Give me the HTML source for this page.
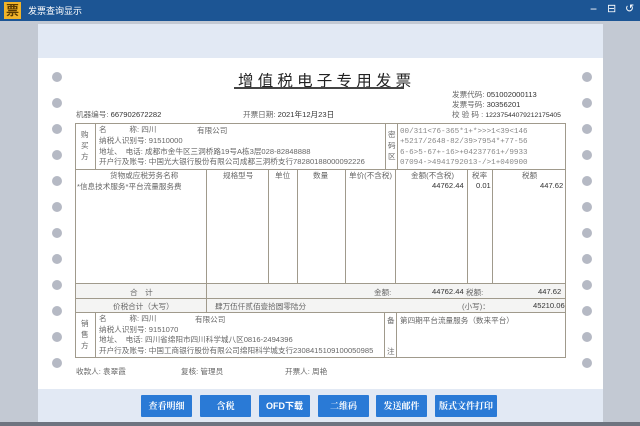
<!DOCTYPE html>
<html><head><meta charset="utf-8"><style>
*{margin:0;padding:0;box-sizing:border-box}
body{width:640px;height:426px;overflow:hidden;background:#c3c9d3;font-family:"Liberation Sans","Noto Sans CJK SC",sans-serif;position:relative;color:#555}
.a{position:absolute;white-space:nowrap}
.t{font-size:7.6px;color:#666}
.b{border:1px solid #a09a8c}
.dot{position:absolute;width:10px;height:10px;border-radius:50%;background:#b5b9c4}
.btn{position:absolute;top:395px;height:22px;background:#2a7ad6;color:#fff;font-size:9px;font-weight:bold;text-align:center;line-height:22px;border-radius:1px;font-family:"Noto Serif CJK SC",serif}
.mono{font-family:"Liberation Mono",monospace;font-size:7.6px;color:#888;line-height:10.3px}
</style></head><body>
<div class="a" style="left:0;top:0;width:640px;height:21px;background:#1c5594"></div>
<div class="a" style="left:4px;top:2px;width:17px;height:17px;background:#f0b429;color:#5a3a00;font-size:13px;font-weight:bold;line-height:17px;text-align:center">票</div>
<div class="a" style="left:28px;top:4px;color:#fff;font-size:9px">发票查询显示</div>
<div class="a" style="left:590px;top:2px;color:#fff;font-size:12px">−</div>
<div class="a" style="left:607px;top:2px;color:#fff;font-size:11px">⊟</div>
<div class="a" style="left:625px;top:2px;color:#fff;font-size:11px">↺</div>
<div class="a" style="left:38px;top:24px;width:565px;height:34px;background:#e2e9f4"></div>
<div class="a" style="left:38px;top:58px;width:565px;height:331px;background:#fff"></div>
<div class="a" style="left:38px;top:389px;width:565px;height:34px;background:#e2e9f4"></div>
<div class="a" style="left:0;top:422px;width:640px;height:4px;background:#6e7480"></div>
<div class="dot" style="left:52px;top:72px"></div><div class="dot" style="left:52px;top:98px"></div><div class="dot" style="left:52px;top:124px"></div><div class="dot" style="left:52px;top:150px"></div><div class="dot" style="left:52px;top:176px"></div><div class="dot" style="left:52px;top:202px"></div><div class="dot" style="left:52px;top:228px"></div><div class="dot" style="left:52px;top:254px"></div><div class="dot" style="left:52px;top:280px"></div><div class="dot" style="left:52px;top:306px"></div><div class="dot" style="left:52px;top:332px"></div><div class="dot" style="left:52px;top:358px"></div>
<div class="dot" style="left:582px;top:72px"></div><div class="dot" style="left:582px;top:98px"></div><div class="dot" style="left:582px;top:124px"></div><div class="dot" style="left:582px;top:150px"></div><div class="dot" style="left:582px;top:176px"></div><div class="dot" style="left:582px;top:202px"></div><div class="dot" style="left:582px;top:228px"></div><div class="dot" style="left:582px;top:254px"></div><div class="dot" style="left:582px;top:280px"></div><div class="dot" style="left:582px;top:306px"></div><div class="dot" style="left:582px;top:332px"></div><div class="dot" style="left:582px;top:358px"></div>
<div class="a" style="left:238px;top:69px;font-size:15.5px;color:#222;letter-spacing:4.2px">增值税电子专用发票</div>
<div class="a" style="left:234px;top:87px;width:170px;border-top:2px solid #444"></div>
<div class="a t" style="left:452px;top:89px">发票代码: <span style="color:#333">051002000113</span></div>
<div class="a t" style="left:452px;top:99px">发票号码: <span style="color:#333">30356201</span></div>
<div class="a t" style="left:452px;top:109px">校 验 码 : <span style="color:#333;font-size:6.8px">12237544079212175405</span></div>
<div class="a t" style="left:76px;top:109px">机器编号: <span style="color:#333">667902672282</span></div>
<div class="a t" style="left:243px;top:109px">开票日期: <span style="color:#333">2021年12月23日</span></div>
<!-- table -->
<div class="a b" style="left:75px;top:123px;width:491px;height:235px"></div>
<div class="a" style="left:75px;top:169px;width:491px;border-top:1px solid #a09a8c"></div>
<div class="a" style="left:95px;top:123px;height:46px;border-left:1px solid #a09a8c"></div>
<div class="a" style="left:385px;top:123px;height:46px;border-left:1px solid #a09a8c"></div>
<div class="a" style="left:397px;top:123px;height:46px;border-left:1px solid #a09a8c"></div>
<div class="a t" style="left:81px;top:129px;line-height:11px;width:8px;white-space:normal">购买方</div>
<div class="a t" style="left:99px;top:125px;line-height:10.8px">名　　　称: 四川<br>纳税人识别号: 91510000<br>地址、　电话: 成都市金牛区三洞桥路19号A栋3层028-82848888<br>开户行及账号: 中国光大银行股份有限公司成都三洞桥支行78280188000092226</div>
<div class="a t" style="left:197px;top:125px">有限公司</div>
<div class="a t" style="left:388px;top:129px;line-height:11px;width:8px;white-space:normal">密码区</div>
<div class="a mono" style="left:400px;top:127px">00/311&lt;76-365*1+*&gt;&gt;&gt;1&lt;39&lt;146<br>+5217/2648-82/39&gt;7954*+77-56<br>6-6&gt;5-67+-16&gt;+04237761+/9933<br>07094-&gt;4941792013-/&gt;1+040900</div>
<!-- item columns -->
<div class="a" style="left:206px;top:169px;height:143px;border-left:1px solid #a09a8c"></div>
<div class="a" style="left:268px;top:169px;height:114px;border-left:1px solid #a09a8c"></div>
<div class="a" style="left:297px;top:169px;height:114px;border-left:1px solid #a09a8c"></div>
<div class="a" style="left:345px;top:169px;height:114px;border-left:1px solid #a09a8c"></div>
<div class="a" style="left:395px;top:169px;height:114px;border-left:1px solid #a09a8c"></div>
<div class="a" style="left:467px;top:169px;height:114px;border-left:1px solid #a09a8c"></div>
<div class="a" style="left:492px;top:169px;height:114px;border-left:1px solid #a09a8c"></div>
<div class="a t" style="left:110px;top:170px">货物或应税劳务名称</div>
<div class="a t" style="left:223px;top:170px">规格型号</div>
<div class="a t" style="left:275px;top:170px">单位</div>
<div class="a t" style="left:313px;top:170px">数量</div>
<div class="a t" style="left:349px;top:170px">单价(不含税)</div>
<div class="a t" style="left:411px;top:170px">金额(不含税)</div>
<div class="a t" style="left:472px;top:170px">税率</div>
<div class="a t" style="left:522px;top:170px">税额</div>
<div class="a t" style="left:77px;top:181px">*信息技术服务*平台流量服务费</div>
<div class="a t" style="left:432px;top:181px;color:#333">44762.44</div>
<div class="a t" style="left:476px;top:181px;color:#333">0.01</div>
<div class="a t" style="left:540px;top:181px;color:#333">447.62</div>
<div class="a" style="left:76px;top:283px;width:489px;height:29px;background:#f4f4f3;border-top:1px solid #a09a8c"></div>
<div class="a" style="left:75px;top:298px;width:491px;border-top:1px solid #a09a8c"></div>
<div class="a" style="left:75px;top:312px;width:491px;border-top:1px solid #a09a8c"></div>
<div class="a" style="left:206px;top:283px;height:29px;border-left:1px solid #a09a8c"></div>
<div class="a t" style="left:130px;top:287px">合　计</div>
<div class="a t" style="left:374px;top:287px">金额:</div>
<div class="a t" style="left:432px;top:287px;color:#333">44762.44</div>
<div class="a t" style="left:466px;top:287px">税额:</div>
<div class="a t" style="left:538px;top:287px;color:#333">447.62</div>
<div class="a t" style="left:113px;top:301px">价税合计（大写）</div>
<div class="a t" style="left:215px;top:301px">肆万伍仟贰佰壹拾圆零陆分</div>
<div class="a t" style="left:462px;top:301px">(小写)：</div>
<div class="a t" style="left:533px;top:301px;color:#333">45210.06</div>
<div class="a" style="left:95px;top:312px;height:46px;border-left:1px solid #a09a8c"></div>
<div class="a" style="left:384px;top:312px;height:46px;border-left:1px solid #a09a8c"></div>
<div class="a" style="left:396px;top:312px;height:46px;border-left:1px solid #a09a8c"></div>
<div class="a t" style="left:81px;top:318px;line-height:11px;width:8px;white-space:normal">销售方</div>
<div class="a t" style="left:99px;top:314px;line-height:10.5px">名　　　称: 四川<br>纳税人识别号: 9151070<br>地址、　电话: 四川省绵阳市四川科学城八区0816-2494396<br>开户行及账号: 中国工商银行股份有限公司绵阳科学城支行2308415109100050985</div>
<div class="a t" style="left:195px;top:314px">有限公司</div>
<div class="a t" style="left:387px;top:315px">备</div>
<div class="a t" style="left:387px;top:346px">注</div>
<div class="a t" style="left:400px;top:315px">第四期平台流量服务（数来平台）</div>
<div class="a t" style="left:76px;top:366px">收款人: 袁翠霞</div>
<div class="a t" style="left:181px;top:366px">复核: 管理员</div>
<div class="a t" style="left:285px;top:366px">开票人: 周艳</div>
<div class="btn" style="left:141px;width:51px">查看明细</div>
<div class="btn" style="left:200px;width:51px">含税</div>
<div class="btn" style="left:259px;width:51px;font-family:'Liberation Sans','Noto Sans CJK SC',sans-serif">OFD下载</div>
<div class="btn" style="left:318px;width:51px">二维码</div>
<div class="btn" style="left:376px;width:51px">发送邮件</div>
<div class="btn" style="left:435px;width:62px">版式文件打印</div>
</body></html>
